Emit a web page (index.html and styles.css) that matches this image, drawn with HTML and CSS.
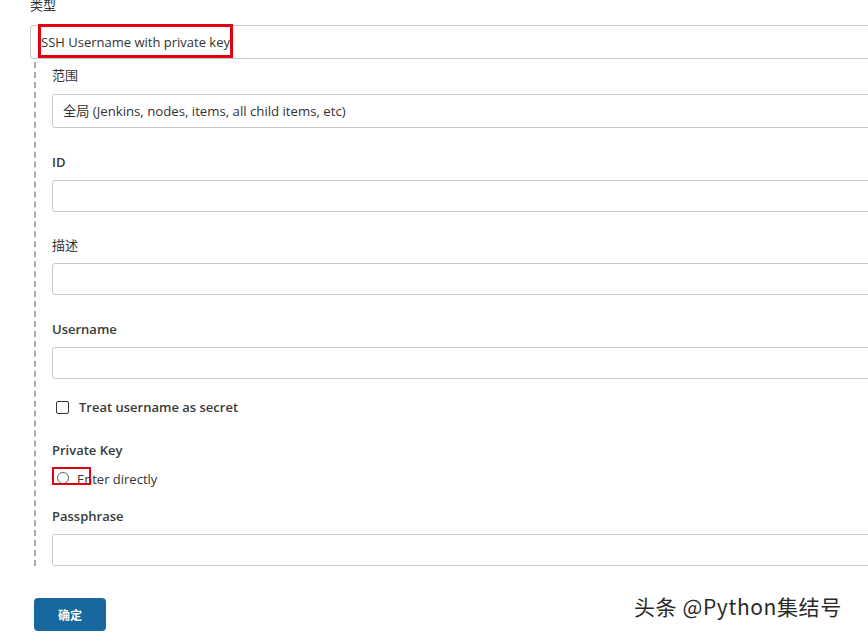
FILE: index.html
```html
<!DOCTYPE html>
<html>
<head>
<meta charset="utf-8">
<link rel="stylesheet" href="styles.css">
</head>
<body>
<div class="form">
  <div class="label top-label">类型</div>
  <div class="select-wrap">
    <div class="select type-select">SSH Username with private key</div>
    <div class="mark mark-type"></div>
  </div>
  <div class="nested">
    <div class="label first">范围</div>
    <div class="select scope-select">全局 (Jenkins, nodes, items, all child items, etc)</div>

    <div class="label strong g24">ID</div>
    <div class="input"></div>

    <div class="label g23">描述</div>
    <div class="input"></div>

    <div class="label strong g24">Username</div>
    <div class="input"></div>

    <div class="check-row">
      <span class="checkbox"></span>
      <span class="check-text">Treat username as secret</span>
    </div>

    <div class="label strong g23">Private Key</div>
    <div class="radio-row">
      <span class="radio"></span>
      <span class="radio-text">Enter directly</span>
      <div class="mark mark-radio"></div>
    </div>

    <div class="label strong g17">Passphrase</div>
    <div class="input"></div>
  </div>
  <div class="button">确定</div>
</div>
<div class="watermark">头条 @Python集结号</div>
</body>
</html>
```

FILE: styles.css
```css
html, body {
  margin: 0;
  padding: 0;
  background: #fff;
  overflow: hidden;
  height: 635px;
}
body {
  position: relative;
  font-family: "Open Sans", "Noto Sans CJK SC", sans-serif;
  font-size: 13px;
  color: #333;
}
.form {
  width: 900px;
  padding-left: 30px;
}
.label {
  height: 20px;
  line-height: 20px;
  font-size: 13px;
  color: #333;
}
.top-label {
  margin-top: -5px;
  margin-bottom: 10px;
}
.strong {
  font-weight: 600;
  color: #3a3a3a;
}
.select-wrap {
  position: relative;
}
.select {
  box-sizing: border-box;
  height: 34px;
  line-height: 32px;
  border: 1px solid #c9c9c9;
  border-radius: 3px;
  background: #fff;
  font-size: 13.2px;
  color: #333;
}
.type-select {
  padding-left: 10px;
  font-size: 13px;
}
.scope-select {
  padding-left: 10px;
}
.mark {
  position: absolute;
  box-sizing: border-box;
  border: 3px solid #e3000f;
}
.mark-type {
  left: 8px;
  top: -1px;
  width: 195px;
  height: 34px;
}
.nested {
  margin-top: 3px;
  margin-left: 4px;
  border-left: 2px dashed #ababab;
  padding-left: 16px;
  padding-top: 3px;
}
.first {
  margin-bottom: 9px;
}
.input {
  box-sizing: border-box;
  height: 32px;
  border: 1px solid #c9c9c9;
  border-radius: 3px;
  background: #fff;
}
.label + .input {
  margin-top: 8px;
}
.g24 { margin-top: 24px; }
.g23 { margin-top: 23px; }
.g17 { margin-top: 17px; }
.check-row {
  margin-top: 18px;
  height: 20px;
  display: flex;
  align-items: center;
  padding-left: 4px;
}
.checkbox {
  box-sizing: border-box;
  width: 13px;
  height: 13px;
  border: 1px solid #333;
  border-radius: 2px;
  margin-right: 10px;
}
.check-text {
  font-weight: 600;
  font-size: 13px;
  color: #3a3a3a;
}
.radio-row {
  position: relative;
  margin-top: 9px;
  height: 20px;
  display: flex;
  align-items: center;
  padding-left: 5px;
}
.radio {
  box-sizing: border-box;
  width: 12px;
  height: 12px;
  border: 1px solid #666;
  border-radius: 50%;
  margin-right: 8px;
  margin-top: -3px;
}
.radio-text {
  font-size: 13px;
}
.mark-radio {
  left: 0;
  top: -2px;
  width: 39px;
  height: 18px;
  border-width: 2.5px;
}
.button {
  margin-top: 32px;
  margin-left: 4px;
  width: 72px;
  height: 33px;
  line-height: 33px;
  background: #16689f;
  border-radius: 4px;
  color: #fff;
  font-weight: 700;
  font-size: 12px;
  text-align: center;
  font-family: "Noto Sans CJK SC", sans-serif;
}
.watermark {
  position: absolute;
  left: 634px;
  top: 591px;
  font-family: "Noto Sans CJK SC", sans-serif;
  font-size: 21px;
  letter-spacing: 0.6px;
  line-height: 30px;
  color: #2a2a2a;
  text-shadow: 1px 1px 0 #fff, -1px -1px 0 #fff, 1px -1px 0 #fff, -1px 1px 0 #fff;
}
```
